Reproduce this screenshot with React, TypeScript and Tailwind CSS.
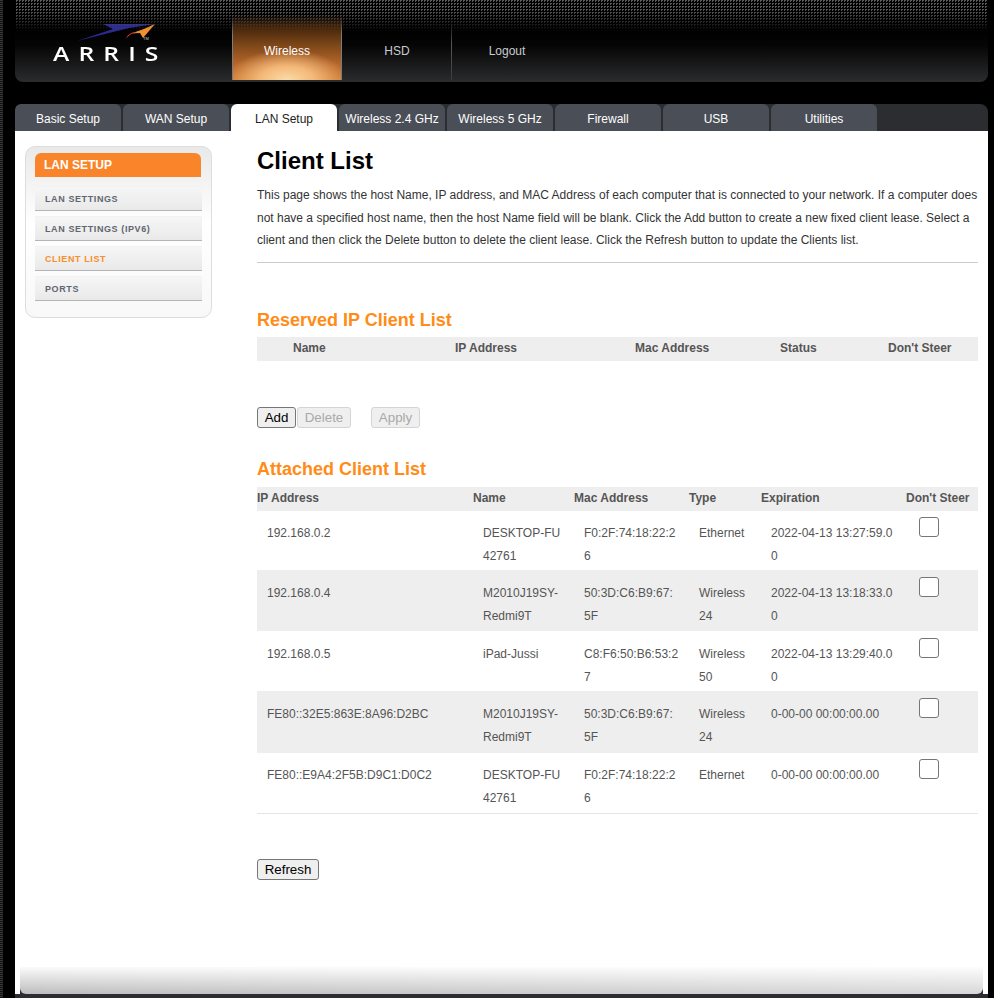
const tabs = ["Basic Setup","WAN Setup","LAN Setup","Wireless 2.4 GHz","Wireless 5 GHz","Firewall","USB","Utilities"];
const side = ["LAN SETTINGS","LAN SETTINGS (IPV6)","CLIENT LIST","PORTS"];
const rows = [
  { c: ["192.168.0.2","DESKTOP-FU42761","F0:2F:74:18:22:26","Ethernet","2022-04-13 13:27:59.00"], row: "h-[59px]", cell: "pt-[11px]", box: "pt-[6px]" },
  { c: ["192.168.0.4","M2010J19SY-Redmi9T","50:3D:C6:B9:67:5F","Wireless 24","2022-04-13 13:18:33.00"], row: "h-[61px] bg-[#eeeeee]", cell: "pt-[12px]", box: "pt-[7px]" },
  { c: ["192.168.0.5","iPad-Jussi","C8:F6:50:B6:53:27","Wireless 50","2022-04-13 13:29:40.00"], row: "h-[60px]", cell: "pt-[12px]", box: "pt-[7px]" },
  { c: ["FE80::32E5:863E:8A96:D2BC","M2010J19SY-Redmi9T","50:3D:C6:B9:67:5F","Wireless 24","0-00-00 00:00:00.00"], row: "h-[62px] bg-[#eeeeee]", cell: "pt-[12px]", box: "pt-[7px]" },
  { c: ["FE80::E9A4:2F5B:D9C1:D0C2","DESKTOP-FU42761","F0:2F:74:18:22:26","Ethernet","0-00-00 00:00:00.00"], row: "h-[61px] border-b border-[#e4e4e4]", cell: "pt-[11px]", box: "pt-[6px]" },
];
const btn = "h-[21px] rounded-[3px] border pt-[1px] text-[13.33px] bg-[#efefef] leading-none";

export default function App() {
  return (
    <div className="relative h-[998px] overflow-hidden bg-black pl-[15px] pr-[6px] font-['Liberation_Sans',Arial,sans-serif] text-[12px] text-[#555555]">
      <div className="absolute inset-y-0 left-0 w-[3px] bg-[repeating-linear-gradient(#383838_0_1px,#111_1px_2px)]" />
      <header className="relative flex h-[82px] overflow-hidden rounded-b-[8px] bg-[linear-gradient(#000_0px,#000_30px,#050505_45px,#2b2c2e_100%)]">
        <div className="relative w-[217px]">
          <svg className="absolute left-[62px] top-[24px]" width="90" height="20" viewBox="0 0 90 20">
            <path d="M26 0 L78 0 L52 4 L36 8 L0 17 L36 5 Z" fill="#2b2a8e" />
            <path d="M78 0 L66 14 L63 9 L54 9.5 Q66 6 78 0 Z" fill="#f2902c" />
            <path d="M49 14.5 C51 10 55 8 60 8 L54 10 Z" fill="#d8332a" />
          </svg>
          <span className="absolute left-[38px] top-[43px] origin-left scale-x-[1.3] text-[19px] font-semibold leading-[22px] tracking-[7px] text-white font-['Open_Sans',sans-serif]">ARRIS</span>
          <span className="absolute left-[128px] top-[37px] text-[4px] leading-[4px] text-[#cccccc]">TM</span>
        </div>
        <nav className="relative flex h-[80px]">
          <div className="flex h-full w-[110px] items-center justify-center pt-[22px] text-white [background:linear-gradient(transparent_20%,#7b7d80_45%,#7b7d80)_left/1px_100%_no-repeat,linear-gradient(transparent_20%,#7b7d80_45%,#7b7d80)_right/1px_100%_no-repeat,radial-gradient(ellipse_55%_38%_at_50%_100%,#fbdca8,#f3b878_45%,transparent),linear-gradient(transparent_18%,#3f220a_32%,#7a4518_55%,#b5662a_80%,#d07a30_100%)]">Wireless</div>
          <div className="flex h-full w-[110px] items-center justify-center pt-[22px] text-[#c9ccd0] [background:linear-gradient(transparent_25%,#55575a_55%,#3a3b3d)_right/1px_100%_no-repeat]">HSD</div>
          <div className="flex h-full w-[110px] items-center justify-center pt-[22px] text-[#c9ccd0]">Logout</div>
        </nav>
        <div className="pointer-events-none absolute inset-x-0 top-0 h-[32px] bg-[conic-gradient(#5a5a5a_0_25%,transparent_0)] bg-[length:3px_3px] [mask-image:linear-gradient(#000_30%,transparent)]" />
      </header>

      <div className="mt-[22px] flex h-[27px] gap-[2px] rounded-t-[8px] bg-[#2b2d30]">
        {tabs.map(t => (
          <div key={t} className={`flex h-[27px] w-[106px] items-center justify-center rounded-t-[6px] pt-[2px] ${t === "LAN Setup" ? "bg-white text-[#222222]" : "bg-[#4a4e57] text-white"}`}>{t}</div>
        ))}
      </div>

      <div className="flex h-[863px] bg-white">
        <div className="w-[242px] shrink-0 pl-[10px] pt-[15px]">
          <aside className="h-[172px] w-[187px] rounded-[10px] border border-[#dddddd] bg-[linear-gradient(#e9e9e9,#ffffff_45%,#f8f8f8)] pl-[9px] pt-[6px]">
            <div className="flex h-[24px] w-[166px] items-center rounded-t-[6px] bg-[#f9842a] pl-[9px] text-[12px] font-bold text-white">LAN SETUP</div>
            <div className="mt-[9px] flex flex-col gap-[5px]">
              {side.map(s => (
                <div key={s} className={`flex h-[25px] w-[167px] items-center border-t border-b border-t-[#f2f2f2] border-b-[#b5b5b5] bg-[linear-gradient(#f6f6f6,#e9e9e9)] pl-[10px] pt-[2px] text-[9px] font-bold tracking-[0.6px] ${s === "CLIENT LIST" ? "text-[#f98d2c]" : "text-[#5f6670]"}`}>{s}</div>
              ))}
            </div>
          </aside>
        </div>

        <main className="w-[721px] shrink-0">
          <h1 className="mt-[15px] text-[24px] font-bold leading-[30px] text-black">Client List</h1>
          <p className="mt-[8px] w-[724px] text-[12px] leading-[22.5px] text-[#333333]">This page shows the host Name, IP address, and MAC Address of each computer that is connected to your network. If a computer does not have a specified host name, then the host Name field will be blank. Click the Add button to create a new fixed client lease. Select a client and then click the Delete button to delete the client lease. Click the Refresh button to update the Clients list.</p>
          <hr className="mt-[10px] border-[#cccccc]" />

          <h2 className="mt-[46px] text-[18px] font-bold leading-[22px] text-[#ff8c16]">Reserved IP Client List</h2>
          <div className="mt-[6px] grid h-[24px] grid-cols-[162px_180px_145px_108px_90px] items-center bg-[#eeeeee] pb-[1px] pl-[36px] font-bold">
            <span>Name</span>
            <span>IP Address</span>
            <span>Mac Address</span>
            <span>Status</span>
            <span className="whitespace-nowrap">Don't Steer</span>
          </div>

          <div className="mt-[46px] flex">
            <button className={`${btn} w-[39px] border-[#767676] text-black`}>Add</button>
            <button disabled className={`${btn} ml-[1px] w-[54px] border-[#d4d4d4] text-[#a9a9a9]`}>Delete</button>
            <button disabled className={`${btn} ml-[20px] w-[49px] border-[#d4d4d4] text-[#a9a9a9]`}>Apply</button>
          </div>

          <h2 className="mt-[30px] text-[18px] font-bold leading-[22px] text-[#ff8c16]">Attached Client List</h2>
          <div className="mt-[7px] grid h-[24px] grid-cols-[216px_101px_115px_72px_145px_72px] items-center bg-[#eeeeee] pb-[2px] font-bold">
            <span>IP Address</span>
            <span>Name</span>
            <span>Mac Address</span>
            <span>Type</span>
            <span>Expiration</span>
            <span className="whitespace-nowrap">Don't Steer</span>
          </div>
          {rows.map((r, i) => (
            <div key={i} className={`grid grid-cols-[216px_101px_115px_72px_145px_72px] leading-[23px] ${r.row}`}>
              {r.c.map((c, j) => (
                <div key={j} className={`break-all px-[10px] ${r.cell}`}>{c}</div>
              ))}
              <div className={`pl-[13px] ${r.box}`}>
                <input type="checkbox" className="block h-[20px] w-[20px] appearance-none rounded-[3px] border border-[#767676] bg-white" />
              </div>
            </div>
          ))}
          <button className={`${btn} mt-[45px] block w-[62px] border-[#767676] text-black`}>Refresh</button>
        </main>
      </div>

      <div className="absolute bottom-[4px] left-[20px] h-[27px] w-[963px] bg-[#2b2d30]">
        <div className="h-full rounded-b-[6px] [background:linear-gradient(90deg,transparent,#ffffff66),linear-gradient(#fbfbfb,#bdbdbf)]" />
      </div>
      <div className="absolute bottom-0 left-[15px] h-[4px] w-[973px] bg-[#2b2d30]" />
    </div>
  );
}
